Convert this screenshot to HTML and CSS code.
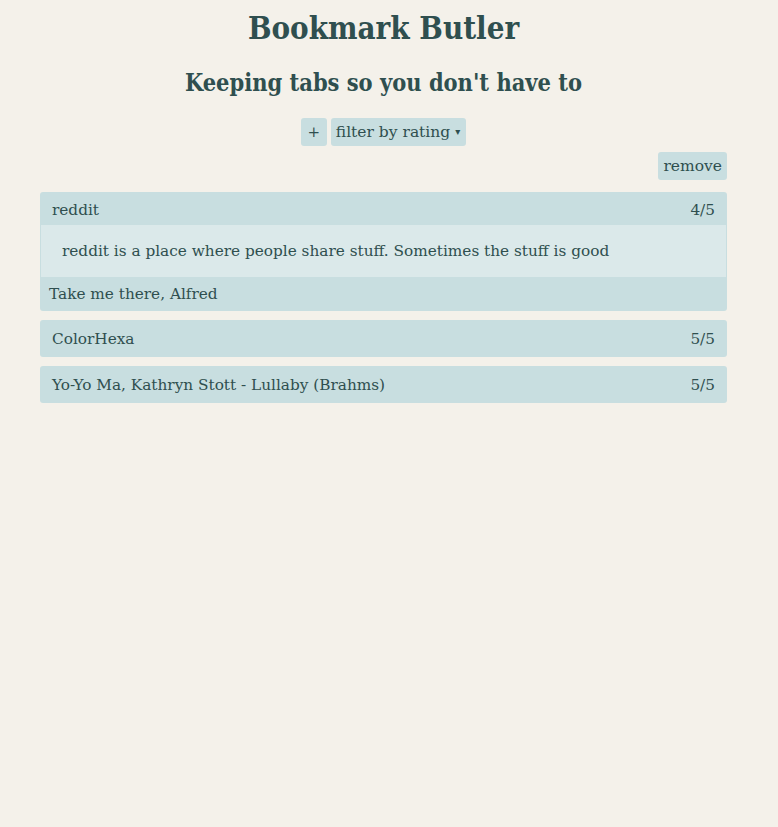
FILE: index.html
```html
<!DOCTYPE html>
<html>
<head>
<meta charset="utf-8">
<link rel="stylesheet" href="styles.css">
</head>
<body>
<div class="app">
  <h1 class="title">Bookmark Butler</h1>
  <h2 class="subtitle">Keeping tabs so you don't have to</h2>
  <div class="controls">
    <button class="btn add">+</button>
    <button class="btn select">filter by rating <span class="caret">▾</span></button>
  </div>
  <div class="remove-row">
    <button class="btn remove">remove</button>
  </div>
  <ul class="list">
    <li class="card">
      <div class="card-head"><span>reddit</span><span>4/5</span></div>
      <div class="card-desc">reddit is a place where people share stuff. Sometimes the stuff is good</div>
      <div class="card-link">Take me there, Alfred</div>
    </li>
    <li class="card">
      <div class="card-head tall"><span>ColorHexa</span><span>5/5</span></div>
    </li>
    <li class="card">
      <div class="card-head tall"><span>Yo-Yo Ma, Kathryn Stott - Lullaby (Brahms)</span><span>5/5</span></div>
    </li>
  </ul>
</div>
</body>
</html>
```
FILE: styles.css
```css
html, body {
  margin: 0;
  padding: 0;
  background: #f4f1ea;
}
body {
  font-family: "DejaVu Serif", "Liberation Serif", serif;
  color: #2f4f4f;
}
.app {
  width: 687px;
  margin-left: 40px;
}
.title {
  margin: 8px 0 0;
  text-align: center;
  font-family: "DejaVu Serif Condensed", "DejaVu Serif", serif;
  font-size: 31px;
  line-height: 40px;
  font-weight: bold;
}
.subtitle {
  margin: 19px 0 0;
  text-align: center;
  font-family: "DejaVu Serif Condensed", "DejaVu Serif", serif;
  font-size: 23.4px;
  line-height: 32px;
  font-weight: bold;
}
.controls {
  display: flex;
  justify-content: center;
  gap: 4px;
  margin-top: 19px;
}
.btn {
  font-family: inherit;
  color: #2f4f4f;
  background: #c8dee0;
  border: none;
  border-radius: 3px;
  height: 28px;
  padding: 0 5px;
  font-size: 15.5px;
}
.add { width: 26px; padding: 0; font-size: 15px; }
.select { padding: 0 6px 0 5px; }
.remove { padding: 0 5px; }
.caret { font-size: 10px; vertical-align: 2px; }
.remove-row {
  display: flex;
  justify-content: flex-end;
  margin-top: 6px;
}
.list {
  list-style: none;
  margin: 12px 0 0;
  padding: 0;
  display: flex;
  flex-direction: column;
  gap: 9px;
}
.card {
  background: #c8dee0;
  border-radius: 3px;
  overflow: hidden;
  font-size: 15.3px;
}
.card-head {
  display: flex;
  justify-content: space-between;
  height: 33px;
  align-items: center;
  padding: 2px 12px 0;
  box-sizing: border-box;
}
.card-head.tall { height: 37px; padding-top: 1px; }
.card-desc {
  background: #dbe9ea;
  margin: 0 1px;
  height: 52px;
  display: flex;
  align-items: center;
  padding-left: 21px;
}
.card-link {
  height: 34px;
  display: flex;
  align-items: center;
  padding-left: 9px;
}
```
